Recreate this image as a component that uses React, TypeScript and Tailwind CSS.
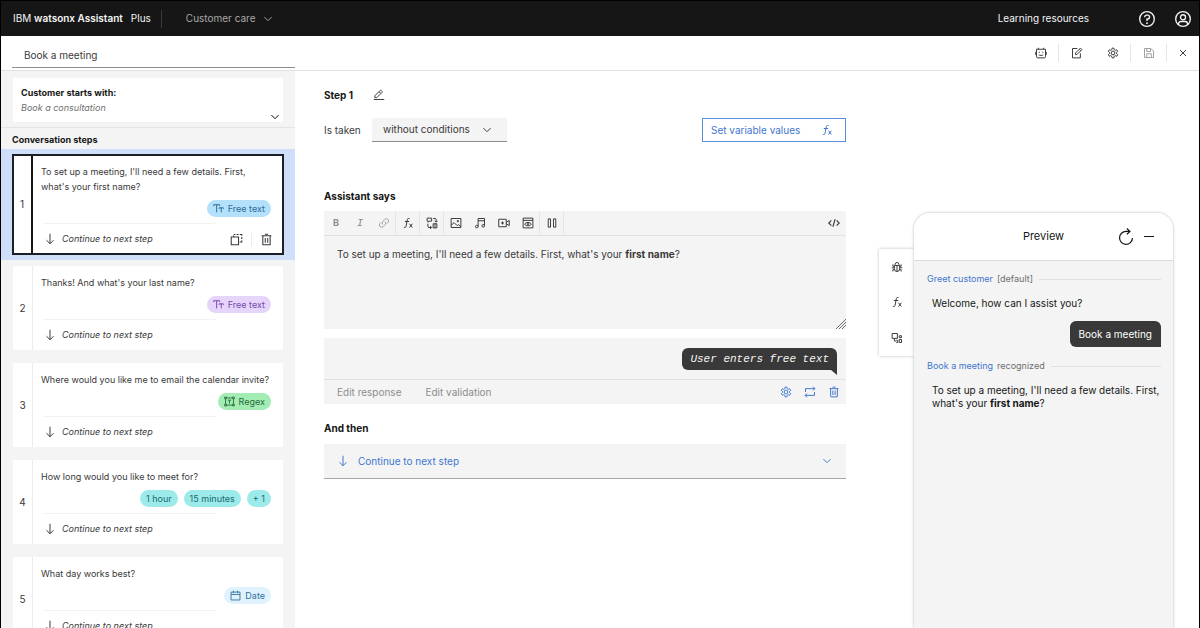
import type { ReactNode } from 'react';

type IconProps = { className?: string };

function Icon({ className = 'size-3', children }: IconProps & { children: ReactNode }) {
  return (
    <svg
      viewBox="0 0 32 32"
      className={`shrink-0 ${className}`}
      fill="none"
      stroke="currentColor"
      strokeWidth="2.6"
      aria-hidden="true"
    >
      {children}
    </svg>
  );
}

const ChevronDown = (p: IconProps) => (
  <Icon {...p}>
    <path d="M6.5 11 16 20.5 25.5 11" />
  </Icon>
);

const ArrowDown = (p: IconProps) => (
  <Icon {...p}>
    <path d="M16 2v27M6.7 19.3 16 28.6l9.3-9.3" />
  </Icon>
);

const Trash = (p: IconProps) => (
  <Icon {...p}>
    <path d="M4 7h24M7 7v21a1 1 0 0 0 1 1h16a1 1 0 0 0 1-1V7M12 3h8M13 12v12M19 12v12" />
  </Icon>
);

const Copy = (p: IconProps) => (
  <Icon {...p}>
    <path d="M3 10h18v19H3z" />
    <path d="M9 10V6M9 3.5h4M16 3.5h5M24 3.5h5v3M29 10v5M29 18v4h-5" />
  </Icon>
);

const Pencil = (p: IconProps) => (
  <Icon {...p}>
    <path d="M2 28h28M5 23v-5L19.7 3.3a1 1 0 0 1 1.4 0l3.6 3.6a1 1 0 0 1 0 1.4L10 23zM16.7 7.7l3.6 3.6" />
  </Icon>
);

const EditBox = (p: IconProps) => (
  <Icon {...p}>
    <path d="M17 4H4v25h21V17" />
    <path d="M12 20v-4L25 3l4 4-13 13zM22 6l4 4" />
  </Icon>
);

const Settings = (p: IconProps) => (
  <Icon {...p}>
    <path
      d="M18.4 3h-4.8l-1 4.4a10 10 0 0 0-2.7 1.6L6.2 7.2 3.5 11.7l3.1 2.7a9 9 0 0 0 0 3.2l-3.1 2.7 2.7 4.5 3.7-1.8a10 10 0 0 0 2.7 1.6l1 4.4h4.8l1-4.4a10 10 0 0 0 2.7-1.6l3.7 1.8 2.7-4.5-3.1-2.7a9 9 0 0 0 0-3.2l3.1-2.7-2.7-4.5L22.1 9a10 10 0 0 0-2.7-1.6z"
      strokeLinejoin="round"
    />
    <circle cx="16" cy="16" r="5" />
  </Icon>
);

const Save = (p: IconProps) => (
  <Icon {...p}>
    <path d="M4 4h17l7 7v17H4zM10 4v8h10V4M10 28V18h12v10" />
  </Icon>
);

const Bot = (p: IconProps) => (
  <Icon {...p}>
    <path d="M4 6h24v20a3 3 0 0 1-3 3H7a3 3 0 0 1-3-3zM9 6V2M23 6V2M2 13v8M30 13v8" />
    <path d="M10 14h3M19 14h3M10 21c3 1.8 9 1.8 12 0" />
  </Icon>
);

const Close = (p: IconProps) => (
  <Icon {...p}>
    <path d="M8 8l16 16M24 8 8 24" />
  </Icon>
);

const Help = (p: IconProps) => (
  <Icon {...p}>
    <circle cx="16" cy="16" r="13" strokeWidth="2.4" />
    <path d="M12 13v-.5A3.5 3.5 0 0 1 15.5 9H17a3.5 3.5 0 0 1 0 7h-1v3.5" strokeWidth="2.4" />
    <circle cx="16" cy="23.5" r="1.6" fill="currentColor" stroke="none" />
  </Icon>
);

const User = (p: IconProps) => (
  <Icon {...p}>
    <circle cx="16" cy="16" r="13" strokeWidth="2.4" />
    <circle cx="16" cy="13" r="4.5" strokeWidth="2.4" />
    <path d="M8 26v-1.5a4 4 0 0 1 4-4h8a4 4 0 0 1 4 4V26" strokeWidth="2.4" />
  </Icon>
);

const Fx = (p: IconProps) => (
  <Icon {...p}>
    <path d="M20 4h-2.5c-2 0-3 1.2-3.4 3.2L10.8 25c-.4 2-1.4 3-3.3 3H5M7.5 12H19" />
    <path d="M20 18l7.5 10M27.5 18 20 28" />
  </Icon>
);

const Link = (p: IconProps) => (
  <Icon {...p}>
    <path d="M13 20a6 6 0 0 1 0-8.5l5-5a6 6 0 0 1 8.5 8.5L24 17.5M19 12a6 6 0 0 1 0 8.5l-5 5A6 6 0 0 1 5.5 17L8 14.5" />
  </Icon>
);

const Variation = (p: IconProps) => (
  <Icon {...p}>
    <path d="M3 3h12v8H9l-3 3v-3H3zM19 4h5a3 3 0 0 1 3 3v6M5 18v7a3 3 0 0 0 3 3h6" />
    <path d="M23 10l4 4 4-4M11 24l4 4-4 4M19 29V18h10v11zM24 18v11" />
  </Icon>
);

const Picture = (p: IconProps) => (
  <Icon {...p}>
    <path d="M3 4h26v24H3zM3 22l8-7 8 8 3-3 7 6" />
    <circle cx="21" cy="11" r="2" />
  </Icon>
);

const Music = (p: IconProps) => (
  <Icon {...p}>
    <path d="M11 25V4h17v19M11 10h17" />
    <circle cx="7.5" cy="25.5" r="3.5" />
    <circle cx="24.5" cy="23.5" r="3.5" />
  </Icon>
);

const Video = (p: IconProps) => (
  <Icon {...p}>
    <path d="M2 6h20v20H2zM22 14l8-5v14l-8-5M12 12v8M8 16h8" />
  </Icon>
);

const Embed = (p: IconProps) => (
  <Icon {...p}>
    <path d="M3 3h26v26H3zM3 9h26" />
    <path d="M7 19c4-6 14-6 18 0-4 6-14 6-18 0z" />
    <circle cx="16" cy="19" r="2" />
  </Icon>
);

const Pause = (p: IconProps) => (
  <Icon {...p}>
    <path d="M6 5h6v22H6zM20 5h6v22h-6z" />
  </Icon>
);

const Code = (p: IconProps) => (
  <Icon {...p}>
    <path d="M9 9l-7 7 7 7M23 9l7 7-7 7M19 6l-6 20" strokeWidth="3" />
  </Icon>
);

const Repeat = (p: IconProps) => (
  <Icon {...p}>
    <path d="M4 16V7h25M24 2l5 5-5 5M28 16v9H3M8 20l-5 5 5 5" />
  </Icon>
);

const Restart = (p: IconProps) => (
  <Icon {...p}>
    <path d="M22 6h-6a11.5 11.5 0 1 0 11.5 12M17.5 1 23 6l-5.5 5" strokeWidth="2.2" />
  </Icon>
);

const Bug = (p: IconProps) => (
  <Icon {...p}>
    <path d="M9 12h14v9a7 7 0 0 1-14 0zM11 12V9a5 5 0 0 1 10 0v3M16 12v16M2 18h7M23 18h7M9 14H5V9M23 14h4V9M9 23H5v5M23 23h4v5" />
  </Icon>
);

const Shapes = (p: IconProps) => (
  <Icon {...p}>
    <path d="M3 4h14v13H3zM22 10h6v5h-6zM22 20h6v8h-6zM14 22h4v6h-4M9 17v7h5" />
  </Icon>
);

const FreeText = (p: IconProps) => (
  <Icon {...p}>
    <path d="M2 9V5h17v4M10.5 5v22M18 17v-3h12v3M24 14v13" strokeWidth="2.8" />
  </Icon>
);

const Regex = (p: IconProps) => (
  <Icon {...p}>
    <path d="M2 3h5v5H2zM25 3h5v5h-5zM2 24h5v5H2zM25 24h5v5h-5zM7 5.5h18M7 26.5h18M4.5 8v16M27.5 8v16M11 12h10M16 12v10" />
  </Icon>
);

const Calendar = (p: IconProps) => (
  <Icon {...p}>
    <path d="M3 6h26v23H3zM3 13h26M10 2v7M22 2v7" />
  </Icon>
);

type Tag = { label: string; style: string; icon?: (p: IconProps) => ReactNode };
type Step = { text: string; tags: Tag[] };

const steps: Step[] = [
  {
    text: "To set up a meeting, I'll need a few details. First, what's your first name?",
    tags: [{ label: 'Free text', style: 'bg-[#b3e0fb] text-[#2b6c96]', icon: FreeText }],
  },
  {
    text: "Thanks! And what's your last name?",
    tags: [{ label: 'Free text', style: 'bg-[#e5d5fb] text-[#7848ab]', icon: FreeText }],
  },
  {
    text: 'Where would you like me to email the calendar invite?',
    tags: [{ label: 'Regex', style: 'bg-[#a3edb4] text-[#276b3b]', icon: Regex }],
  },
  {
    text: 'How long would you like to meet for?',
    tags: [
      { label: '1 hour', style: 'bg-[#9cebea] text-[#20696c]' },
      { label: '15 minutes', style: 'bg-[#9cebea] text-[#20696c]' },
      { label: '+ 1', style: 'bg-[#9cebea] text-[#20696c]' },
    ],
  },
  {
    text: 'What day works best?',
    tags: [{ label: 'Date', style: 'bg-[#e0f2fd] text-[#30719e]', icon: Calendar }],
  },
];

const formatTools = [
  { label: 'Link', icon: Link, divider: true, muted: true },
  { label: 'Insert variable', icon: Fx, divider: true },
  { label: 'Response variation', icon: Variation, divider: true },
  { label: 'Image', icon: Picture },
  { label: 'Audio', icon: Music },
  { label: 'Video', icon: Video },
  { label: 'Embed', icon: Embed, divider: true },
  { label: 'Pause', icon: Pause, divider: true },
];

const pageActions = [
  { label: 'Assistant', icon: Bot, divider: true },
  { label: 'Edit', icon: EditBox },
  { label: 'Settings', icon: Settings, divider: true },
  { label: 'Save', icon: Save, divider: true, muted: true },
];

function StepCard({ step, index, active }: { step: Step; index: number; active: boolean }) {
  return (
    <div
      className={`flex bg-white ${
        active ? 'outline-2 -outline-offset-1 outline-[#1c2026]' : ''
      }`}
    >
      <div
        className={`flex w-5 shrink-0 items-center justify-center text-[10px] text-[#393939] ${
          active ? 'border-r-2 border-[#161616]' : 'border-r border-[#ececec]'
        }`}
      >
        {index}
      </div>
      <div className="flex min-w-0 flex-1 flex-col pt-[9px] pr-3 pb-[7px] pl-2">
        <p className="text-[9px] leading-[15px] text-[#393939]">{step.text}</p>
        <div className="mt-1.5 flex justify-end gap-1.5">
          {step.tags.map((tag) => (
            <span
              key={tag.label}
              className={`flex h-[17px] items-center gap-1 rounded-full px-1.5 text-[9px] leading-3 ${tag.style}`}
            >
              {tag.icon && <tag.icon className="size-[11px]" />}
              {tag.label}
            </span>
          ))}
        </div>
        <div className="mt-1.5 ml-0.5 w-3/4 border-t border-[#f2f2f2]" />
        <div className="mt-[7px] flex h-4 items-center text-[#393939]">
          <ArrowDown className="ml-[3px] size-3" />
          <span className="ml-1.5 text-[9px] italic">Continue to next step</span>
          {active && (
            <div className="-mr-0.5 ml-auto flex items-center">
              <button aria-label="Duplicate step" className="border-r border-[#ececec] pr-2">
                <Copy className="size-[13px]" />
              </button>
              <button aria-label="Delete step" className="pl-2">
                <Trash className="size-[13px]" />
              </button>
            </div>
          )}
        </div>
      </div>
    </div>
  );
}

function Sidebar() {
  return (
    <aside className="flex w-[294px] shrink-0 flex-col bg-[#f4f4f4]">
      <div className="border-b border-[#e4e4e4] pt-[7px] pr-3 pb-[5px] pl-3">
        <button className="flex h-11 w-full items-end justify-between bg-white pr-0.5 pb-[7px] pl-2 text-left text-[9px] leading-[15px]">
          <span>
            <span className="block font-bold text-[#161616]">Customer starts with:</span>
            <span className="block text-[#6f6f6f] italic">Book a consultation</span>
          </span>
          <ChevronDown className="-mb-2 size-3" />
        </button>
      </div>
      <h2 className="pt-1 pb-0.5 pl-[11px] text-[9px] leading-[15px] font-bold text-[#161616]">
        Conversation steps
      </h2>
      <ol className="flex flex-col">
        {steps.map((step, i) => (
          <li
            key={step.text}
            className={i === 0 ? 'bg-[#cfdff9] px-3 py-1.5' : 'px-3 pt-1.5 pb-[7px]'}
          >
            <StepCard step={step} index={i + 1} active={i === 0} />
          </li>
        ))}
      </ol>
    </aside>
  );
}

function StepEditor() {
  return (
    <main className="min-w-0 flex-1 pt-4 pl-[29px] text-[10px] text-[#393939]">
      <div className="flex h-4 items-center gap-5">
        <h1 className="font-bold text-[#161616]">Step 1</h1>
        <button aria-label="Rename step">
          <Pencil className="size-3" />
        </button>
      </div>

      <div className="mt-[15px] flex items-center">
        <label htmlFor="conditions" className="w-12">
          Is taken
        </label>
        <div className="relative">
          <select
            id="conditions"
            className="h-6 w-[135px] appearance-none border-b border-[#8d8d8d] bg-[#f4f4f4] pl-[11px] text-[#393939]"
          >
            <option>without conditions</option>
          </select>
          <ChevronDown className="pointer-events-none absolute top-1.5 right-[14px] size-3" />
        </div>
        <button className="ml-auto flex h-6 w-36 items-center justify-between border border-[#5b8fd9] pr-3 pl-2 text-[#3f76cf]">
          Set variable values
          <Fx />
        </button>
      </div>

      <h2 className="mt-[46px] leading-4 font-bold text-[#161616]">Assistant says</h2>
      <div className="mt-[7px] flex border-b border-[#e0e0e0] bg-[#f4f4f4]">
        <button aria-label="Bold" className="size-6 text-[9px] font-bold text-[#8d8d8d]">
          B
        </button>
        <button
          aria-label="Italic"
          className="size-6 font-['Liberation_Mono',monospace] text-[11px] text-[#8d8d8d] italic"
        >
          I
        </button>
        {formatTools.map((tool) => (
          <button
            key={tool.label}
            aria-label={tool.label}
            className={`flex size-6 items-center justify-center ${tool.divider ? 'border-r border-[#e6e6e6]' : ''} ${
              tool.muted ? 'text-[#a0a0a0]' : ''
            }`}
          >
            <tool.icon />
          </button>
        ))}
        <button aria-label="Code view" className="ml-auto flex size-6 items-center justify-center">
          <Code />
        </button>
      </div>
      <div
        role="textbox"
        aria-label="Assistant says"
        contentEditable
        suppressContentEditableWarning
        className="relative h-[93px] bg-[#f4f4f4] px-[13px] py-2.5 leading-4 outline-none"
      >
        To set up a meeting, I'll need a few details. First, what's your <b>first name</b>?
        <svg viewBox="0 0 10 10" className="absolute right-0 bottom-0 size-2.5" stroke="#6f6f6f" contentEditable={false}>
          <path d="M0 10 10 0M3 10l7-7M6 10l4-4" />
        </svg>
      </div>

      <div className="mt-[9px] bg-[#f4f4f4]">
        <div className="flex justify-end border-b border-[#e0e0e0] pt-2.5 pr-[9px] pb-[9px]">
          <div className="relative rounded-md rounded-br-none bg-[#393939] px-2 font-['Liberation_Mono',monospace] text-[11px] leading-[22px] text-[#f4f4f4] italic">
            User enters free text
            <svg viewBox="0 0 6 5" className="absolute top-full right-0 h-[5px] w-1.5" fill="#393939">
              <path d="M0 0h6v5z" />
            </svg>
          </div>
        </div>
        <div className="flex h-6 items-center text-[#8d8d8d]">
          <button className="ml-[13px]">Edit response</button>
          <button className="ml-6">Edit validation</button>
          <div className="ml-auto flex text-[#3f76cf]">
            <button aria-label="Response settings" className="flex size-6 items-center justify-center">
              <Settings />
            </button>
            <button aria-label="Change response type" className="flex size-6 items-center justify-center">
              <Repeat />
            </button>
            <button aria-label="Delete response" className="flex size-6 items-center justify-center">
              <Trash />
            </button>
          </div>
        </div>
      </div>

      <h2 className="mt-4 leading-4 font-bold text-[#161616]">And then</h2>
      <button className="mt-2 flex h-[35px] w-full items-center border-b border-[#a8a8a8] bg-[#f4f4f4] px-[13px] text-[#3f76cf]">
        <ArrowDown />
        <span className="ml-[9px]">Continue to next step</span>
        <ChevronDown className="ml-auto size-3" />
      </button>
    </main>
  );
}

function Preview() {
  return (
    <aside className="flex w-[353px] shrink-0 pt-[142px] pr-[26px] pl-[33px] text-[#161616]">
      <div className="mt-9 flex h-[107px] w-[35px] shrink-0 flex-col items-center justify-around bg-white text-[#393939] shadow-[0_0_3px_rgba(0,0,0,0.25)]">
        <button aria-label="Debug">
          <Bug />
        </button>
        <button aria-label="Variables">
          <Fx />
        </button>
        <button aria-label="Segments">
          <Shapes />
        </button>
      </div>
      <div className="z-10 flex min-w-0 flex-1 flex-col overflow-hidden rounded-t-2xl bg-[#f4f4f4] shadow-[0_0_3px_rgba(0,0,0,0.3)]">
        <header className="relative flex h-12 shrink-0 items-center justify-center border-b border-[#dcdcdc] bg-white">
          <h2 className="text-[11px]">Preview</h2>
          <div className="absolute right-4 flex items-center gap-1.5">
            <button aria-label="Restart conversation">
              <Restart className="size-[18px]" />
            </button>
            <button aria-label="Minimize" className="flex h-4 w-4 items-center justify-center">
              <span className="h-px w-2.5 bg-[#161616]" />
            </button>
          </div>
        </header>
        <div className="flex flex-col pt-2.5 pr-3 pl-[13px]">
          <div className="flex items-center text-[9px] leading-4 text-[#6f6f6f]">
            <a href="#greet" className="mr-1 text-[#3f76cf]">
              Greet customer
            </a>
            [default]
            <span className="ml-1.5 h-px flex-1 bg-[#e0e0e0]" />
          </div>
          <p className="mt-2 pl-[5px] text-[10px] leading-4">Welcome, how can I assist you?</p>
          <p className="mt-2.5 self-end rounded-md rounded-br-none bg-[#393939] px-[9px] text-[10px] leading-[26px] text-white">
            Book a meeting
          </p>
          <div className="mt-[11px] flex items-center text-[9px] leading-4 text-[#6f6f6f]">
            <a href="#book" className="mr-1 text-[#3f76cf]">
              Book a meeting
            </a>
            recognized
            <span className="ml-1.5 h-px flex-1 bg-[#e0e0e0]" />
          </div>
          <p className="mt-2.5 -mr-1 pl-[5px] text-[10px] leading-[13px]">
            To set up a meeting, I'll need a few details. First, what's your <b>first name</b>?
          </p>
        </div>
      </div>
    </aside>
  );
}

export default function App() {
  return (
    <div className="flex h-screen flex-col overflow-hidden border-x border-black bg-white font-[Inter,sans-serif]">
      <header className="flex h-9 shrink-0 items-center border-t border-black bg-[#161616] text-[10px] text-[#f4f4f4]">
        <div className="ml-3 flex h-[18px] items-center border-r border-[#393939] pr-2.5">
          IBM&nbsp;<b className="font-semibold">watsonx Assistant</b>
          <span className="ml-2">Plus</span>
        </div>
        <button className="ml-6 flex items-center gap-1.5 text-[#a8a8a8]">
          Customer care
          <ChevronDown />
        </button>
        <a href="#learn" className="mr-[49px] ml-auto">
          Learning resources
        </a>
        <button aria-label="Help" className="mr-[18px]">
          <Help className="size-[18px]" />
        </button>
        <button aria-label="Account" className="mr-[7px]">
          <User className="size-[18px]" />
        </button>
      </header>

      <div className="flex h-[35px] shrink-0 items-center border-b border-[#e0e0e0] text-[#393939]">
        <input
          aria-label="Action name"
          defaultValue="Book a meeting"
          className="mb-0.5 ml-[11px] h-[26px] w-[283px] self-end border-b border-[#8d8d8d] pl-3 text-[10px] outline-none"
        />
        <div className="ml-auto flex">
          {pageActions.map((action) => (
            <button
              key={action.label}
              aria-label={action.label}
              className={`flex h-[18px] w-9 items-center justify-center ${
                action.divider ? 'border-r border-[#e6e6e6]' : ''
              } ${action.muted ? 'text-[#a0a0a0]' : ''}`}
            >
              <action.icon />
            </button>
          ))}
          <button aria-label="Close" className="flex h-[18px] w-8 items-center justify-center">
            <Close />
          </button>
        </div>
      </div>

      <div className="flex min-h-0 flex-1">
        <Sidebar />
        <StepEditor />
        <Preview />
      </div>
    </div>
  );
}
